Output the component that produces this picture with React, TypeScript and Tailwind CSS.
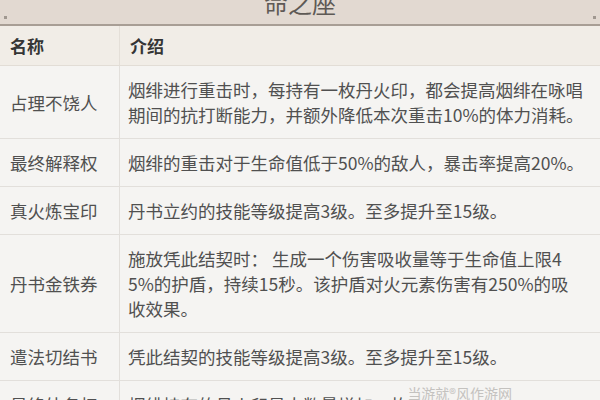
import React from 'react'

interface Row {
  name: string
  lines: string[]
}

const rows: Row[] = [
  {
    name: '占理不饶人',
    lines: [
      '烟绯进行重击时，每持有一枚丹火印，都会提高烟绯在咏唱',
      '期间的抗打断能力，并额外降低本次重击10%的体力消耗。',
    ],
  },
  { name: '最终解释权', lines: ['烟绯的重击对于生命值低于50%的敌人，暴击率提高20%。'] },
  { name: '真火炼宝印', lines: ['丹书立约的技能等级提高3级。至多提升至15级。'] },
  {
    name: '丹书金铁券',
    lines: [
      '施放凭此结契时： 生成一个伤害吸收量等于生命值上限4',
      '5%的护盾，持续15秒。该护盾对火元素伤害有250%的吸',
      '收效果。',
    ],
  },
  { name: '遣法切结书', lines: ['凭此结契的技能等级提高3级。至多提升至15级。'] },
  { name: '最终外务权', lines: ['烟绯持有的丹火印最大数量增加一枚。'] },
]

const font = { fontFamily: '"Noto Sans CJK SC", "Noto Sans", sans-serif' }

export default function App() {
  return (
    <div
      className="relative w-[600px] h-[400px] overflow-hidden bg-[#f5f4f2] text-[#505050]"
      style={font}
    >
      {/* title band */}
      <div className="relative h-[24px] overflow-hidden bg-[#e2d9d1] text-center">
        <div className="-mt-[9px] text-[24px] leading-[24px] text-[#5e5955]">命之座</div>
        <span className="absolute left-[4px] top-[16px] w-[3px] h-[3px] bg-[#a09890]" />
        <span className="absolute right-[4px] top-[16px] w-[3px] h-[3px] bg-[#a09890]" />
      </div>
      <div className="h-[2px] bg-[#a89e95]" />

      {/* header row */}
      <div className="grid grid-cols-[120px_1fr] h-[40px] bg-[#f1ede7] border-b border-[#e2ddd6] text-[17px] font-bold text-[#353535]">
        <div className="flex items-center pl-[10px] border-r border-[#e4dfd8]">名称</div>
        <div className="flex items-center pl-[10px]">介绍</div>
      </div>

      {/* body */}
      {rows.map((row) => (
        <div
          key={row.name}
          className="grid grid-cols-[120px_1fr] border-b border-[#e2dfdb] text-[17.5px] leading-[25px]"
        >
          <div className="flex items-center pl-[10px] py-[11px] border-r border-[#e2dfdb] whitespace-nowrap">
            {row.name}
          </div>
          <div className="py-[11px] pl-[8px]">
            {row.lines.map((line, i) => (
              <div key={i} className="whitespace-nowrap">
                {line}
              </div>
            ))}
          </div>
        </div>
      ))}

      {/* watermark */}
      <div className="absolute right-[88px] bottom-[-4px] text-[14px] text-[#c4c2bf] whitespace-nowrap">
        当游就®风作游网
      </div>
    </div>
  )
}
